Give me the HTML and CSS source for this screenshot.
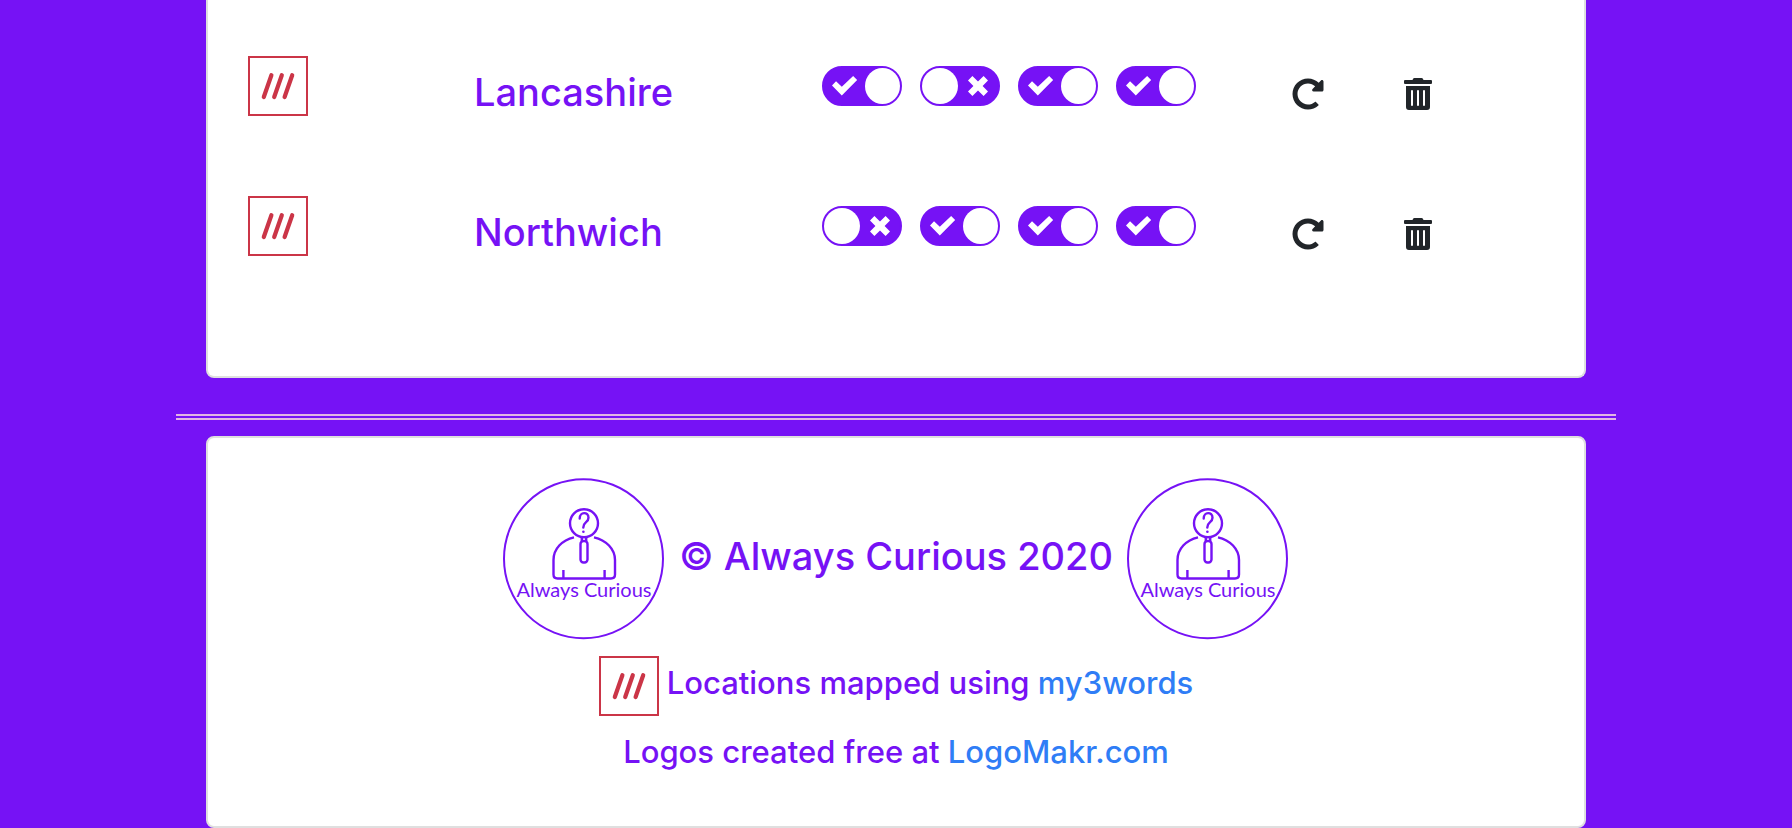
FILE: index.html
```html
<!DOCTYPE html>
<html lang="en">
<head>
<meta charset="utf-8">
<meta name="viewport" content="width=device-width, initial-scale=1">
<title>Always Curious</title>
<link rel="stylesheet" href="styles.css">
</head>
<body>
<svg class="sprite" aria-hidden="true">
  <symbol id="words" viewBox="2 2 56 56">
    <path d="M23.400 19.200 15.800 41M33.800 19.200 26.200 41M44.200 19.200 36.600 41" fill="none" stroke="currentColor" stroke-width="4.200" stroke-linecap="round"/>
  </symbol>
  <symbol id="redo" viewBox="0 0 512 512">
    <path fill="currentColor" d="M256.455 8c66.269.119 126.437 26.233 170.859 68.685l35.715-35.715C478.149 25.851 504 36.559 504 57.941V192c0 13.255-10.745 24-24 24H345.941c-21.382 0-32.090-25.851-16.971-40.971l41.750-41.750c-30.864-28.899-70.801-44.907-113.230-45.273-92.398-.798-170.283 73.977-169.484 169.442C88.764 348.009 162.184 424 256 424c41.127 0 79.997-14.678 110.629-41.556 4.743-4.161 11.906-3.908 16.368.553l39.662 39.662c4.872 4.872 4.631 12.815-.482 17.433C378.202 479.813 319.926 504 256 504 119.034 504 8.001 392.967 8 256.002 7.999 119.193 119.646 7.755 256.455 8z"/>
  </symbol>
  <symbol id="trash" viewBox="0 0 448 512">
    <path fill="currentColor" d="M32 464a48 48 0 0 0 48 48h288a48 48 0 0 0 48-48V128H32zm272-256a16 16 0 0 1 32 0v224a16 16 0 0 1-32 0zm-96 0a16 16 0 0 1 32 0v224a16 16 0 0 1-32 0zm-96 0a16 16 0 0 1 32 0v224a16 16 0 0 1-32 0zM432 32H312l-9.400-18.700A24 24 0 0 0 281.100 0H166.800a23.720 23.720 0 0 0-21.400 13.300L136 32H16A16 16 0 0 0 0 48v32a16 16 0 0 0 16 16h416a16 16 0 0 0 16-16V48a16 16 0 0 0-16-16z"/>
  </symbol>
</svg>

<main class="container">
  <section class="card locations">
    <div class="row">
      <a class="words" href="#" aria-label="Map of Lancashire"><svg><use href="#words"/></svg></a>
      <h2 class="name">Lancashire</h2>
      <div class="toggles">
        <input class="toggle" type="checkbox" aria-label="Lancashire option 1" checked>
        <input class="toggle" type="checkbox" aria-label="Lancashire option 2">
        <input class="toggle" type="checkbox" aria-label="Lancashire option 3" checked>
        <input class="toggle" type="checkbox" aria-label="Lancashire option 4" checked>
      </div>
      <button class="action" type="button" aria-label="Refresh Lancashire"><svg class="redo"><use href="#redo"/></svg></button>
      <button class="action" type="button" aria-label="Delete Lancashire"><svg class="trash"><use href="#trash"/></svg></button>
    </div>
    <div class="row">
      <a class="words" href="#" aria-label="Map of Northwich"><svg><use href="#words"/></svg></a>
      <h2 class="name">Northwich</h2>
      <div class="toggles">
        <input class="toggle" type="checkbox" aria-label="Northwich option 1">
        <input class="toggle" type="checkbox" aria-label="Northwich option 2" checked>
        <input class="toggle" type="checkbox" aria-label="Northwich option 3" checked>
        <input class="toggle" type="checkbox" aria-label="Northwich option 4" checked>
      </div>
      <button class="action" type="button" aria-label="Refresh Northwich"><svg class="redo"><use href="#redo"/></svg></button>
      <button class="action" type="button" aria-label="Delete Northwich"><svg class="trash"><use href="#trash"/></svg></button>
    </div>
  </section>

  <hr class="divider">

  <footer class="card footer">
    <div class="brand">
      <svg class="logo" viewBox="0 0 162 162">
        <g fill="none" stroke="currentColor" stroke-width="2.400">
          <circle cx="80.500" cy="80.700" r="79.500" stroke-width="2"/>
          <circle cx="81" cy="45.200" r="14"/>
          <path d="M78.800 59v4M83.200 59v4"/>
          <rect x="77.500" y="63" width="7" height="21.500" rx="3"/>
          <path d="M71 59.300C59 62 50.500 71 50.500 82v14.500q0 4 4 4h53.500q4 0 4-4V82c0-11-9-20-21-22.700M60.400 92v8M101.600 92v8"/>
          <path d="M76.700 40.500c0-7 8.800-7 8.800-.8 0 5-5.200 4-5.200 9.800" stroke-linecap="round"/>
        </g>
        <circle cx="80.400" cy="53.800" r="1.300" fill="currentColor"/>
        <text class="logo-text" x="81" y="119" text-anchor="middle">Always Curious</text>
      </svg>
      <h2 class="copyright">© Always Curious 2020</h2>
      <svg class="logo" viewBox="0 0 162 162">
        <g fill="none" stroke="currentColor" stroke-width="2.400">
          <circle cx="80.500" cy="80.700" r="79.500" stroke-width="2"/>
          <circle cx="81" cy="45.200" r="14"/>
          <path d="M78.800 59v4M83.200 59v4"/>
          <rect x="77.500" y="63" width="7" height="21.500" rx="3"/>
          <path d="M71 59.300C59 62 50.500 71 50.500 82v14.500q0 4 4 4h53.500q4 0 4-4V82c0-11-9-20-21-22.700M60.400 92v8M101.600 92v8"/>
          <path d="M76.700 40.500c0-7 8.800-7 8.800-.8 0 5-5.200 4-5.200 9.800" stroke-linecap="round"/>
        </g>
        <circle cx="80.400" cy="53.800" r="1.300" fill="currentColor"/>
        <text class="logo-text" x="81" y="119" text-anchor="middle">Always Curious</text>
      </svg>
    </div>
    <div class="credit">
      <span class="words"><svg><use href="#words"/></svg></span>
      <p>Locations mapped using <a href="#">my3words</a></p>
    </div>
    <div class="credit">
      <p>Logos created free at <a href="#">LogoMakr.com</a></p>
    </div>
  </footer>
</main>
</body>
</html>
```

FILE: styles.css
```css
* { box-sizing: border-box; }

body {
  margin: 0;
  background: #7612f5;
  color: #7612f5;
  font-family: Inter, "Liberation Sans", sans-serif;
  font-weight: 500;
}

h2, p { margin: 0; font-weight: 500; }
svg { display: block; }

.sprite { display: none; }

.container {
  max-width: 1440px;
  margin: 0 auto;
}

.card {
  margin: 0 30px;
  border: 2px solid #dfdfdf;
  border-radius: 8px;
  background: #fff;
}

.locations {
  border-top: 0;
  border-radius: 0 0 8px 8px;
  padding: 56px 40px 120px;
  display: grid;
  gap: 80px;
}

.row {
  display: grid;
  grid-template-columns: 226fr 348fr 470fr 112fr 140fr;
  align-items: end;
  justify-items: start;
}

.words {
  width: 60px;
  height: 60px;
  border: 2px solid #cb3547;
  color: #cb3547;
}

.words svg { width: 56px; height: 56px; }

.name, .copyright {
  font-size: 38px;
  line-height: 48px;
}

.copyright { padding-bottom: 6px; }

.toggles {
  display: flex;
  gap: 18px;
  align-self: center;
}

.toggle {
  appearance: none;
  width: 80px;
  height: 40px;
  margin: 0;
  border: 2px solid #7612f5;
  border-radius: 20px;
  background: #7612f5;
  display: flex;
  align-items: center;
  justify-content: space-between;
  cursor: pointer;
}

.toggle::before {
  content: "";
  width: 36px;
  height: 36px;
  border-radius: 50%;
  background: #fff;
}

.toggle::after {
  content: "";
  width: 20px;
  height: 20px;
  margin: 0 10px;
  background: #fff;
  clip-path: polygon(22% 0, 50% 27%, 78% 0, 100% 22%, 73% 50%, 100% 78%, 78% 100%, 50% 73%, 22% 100%, 0 78%, 27% 50%, 0 22%);
}

.toggle:checked { flex-direction: row-reverse; }

.toggle:checked::after {
  width: 26px;
  margin: 0 8px;
  clip-path: polygon(0 47%, 16% 26%, 39% 54%, 84% 0, 100% 20%, 39% 98%);
}

.action {
  border: 0;
  background: none;
  color: #212529;
  padding: 0 0 6px;
  cursor: pointer;
}

.redo { width: 32px; height: 32px; }
.trash { width: 28px; height: 32px; }

.divider {
  height: 6px;
  margin: 36px 0 16px;
  border: solid #e3b5e3;
  border-width: 2px 0;
}

.footer {
  padding: 40px 40px 54px;
}

.brand {
  display: flex;
  align-items: center;
  justify-content: center;
  gap: 14px;
  margin-bottom: 16px;
}

.logo { width: 162px; height: 162px; }

.logo-text {
  font: 400 20px Lato, sans-serif;
  fill: currentColor;
}

.credit {
  display: flex;
  justify-content: center;
  gap: 8px;
  font-size: 31px;
  line-height: 54px;
}

.credit + .credit {
  margin-top: 16px;
  line-height: 40px;
}

.credit a {
  color: #2f7df6;
  text-decoration: none;
}
```
